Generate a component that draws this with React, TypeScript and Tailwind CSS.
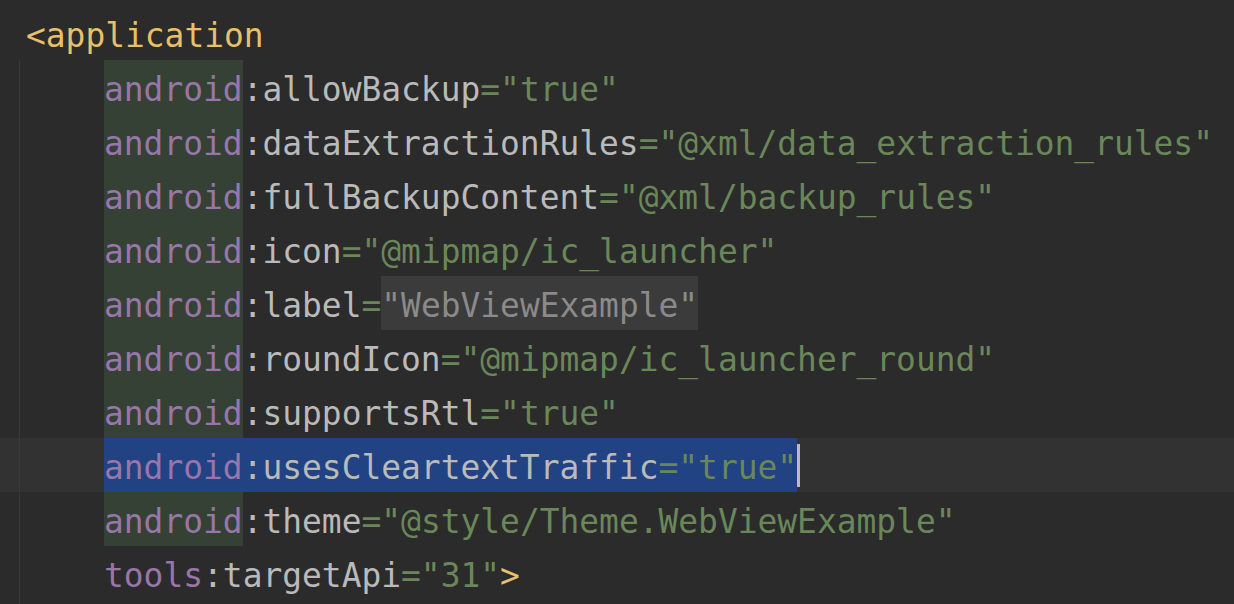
import React from 'react';

type Attr = {
    ns: string;
    name: string;
    value: string;
    flag?: 'label' | 'selected';
    nsMark?: boolean;
};

const attrs: Attr[] = [
    { ns: 'android', name: 'allowBackup', value: 'true', nsMark: true },
    { ns: 'android', name: 'dataExtractionRules', value: '@xml/data_extraction_rules', nsMark: true },
    { ns: 'android', name: 'fullBackupContent', value: '@xml/backup_rules', nsMark: true },
    { ns: 'android', name: 'icon', value: '@mipmap/ic_launcher', nsMark: true },
    { ns: 'android', name: 'label', value: 'WebViewExample', flag: 'label', nsMark: true },
    { ns: 'android', name: 'roundIcon', value: '@mipmap/ic_launcher_round', nsMark: true },
    { ns: 'android', name: 'supportsRtl', value: 'true', nsMark: true },
    { ns: 'android', name: 'usesCleartextTraffic', value: 'true', flag: 'selected' },
    { ns: 'android', name: 'theme', value: '@style/Theme.WebViewExample', nsMark: true },
    { ns: 'tools', name: 'targetApi', value: '31' },
];

const mono = "font-['DejaVu_Sans_Mono','Liberation_Mono',monospace]";
// token cell: full row height, text nudged a little below centre like the IDE
const tok = 'h-full flex items-center pt-[6px]';

const Guide = () => (
    <>
        <div className="w-[19px] shrink-0" />
        <div className="w-px shrink-0 self-stretch bg-[#393939]" />
    </>
);

const AttrLine: React.FC<{ a: Attr; last?: boolean }> = ({ a, last }) => {
    const selected = a.flag === 'selected';
    return (
        <div className={`flex h-[54px] ${selected ? 'bg-[#323232]' : ''}`}>
            <Guide />
            <div className="pl-[84px] flex items-stretch">
                <span className={`flex items-center ${selected ? 'bg-[#214283]' : ''}`}>
                    <span className={`${tok} text-[#9876aa] ${a.nsMark ? 'bg-[#344134]' : ''}`}>{a.ns}</span>
                    <span className={`${tok} text-[#bababa]`}>:{a.name}</span>
                    <span className={`${tok} text-[#6a8759]`}>=</span>
                    {a.flag === 'label' ? (
                        <span className={`${tok} bg-[#3b3b3b] text-[#8a8a8a]`}>"{a.value}"</span>
                    ) : (
                        <span className={`${tok} text-[#6a8759]`}>"{a.value}"</span>
                    )}
                    {last && <span className={`${tok} text-[#e8bf6a]`}>&gt;</span>}
                </span>
                {selected && (
                    <span className="flex items-center">
                        <span className="w-[3px] h-[43px] bg-[#bbbbbb]" />
                    </span>
                )}
            </div>
        </div>
    );
};

export default function App() {
    return (
        <div className={`w-[1234px] h-[604px] overflow-hidden bg-[#2b2b2b] pt-[6px] whitespace-pre text-[32.9px] leading-none ${mono}`}>
            <div className="h-[54px] flex items-center pt-[6px] pl-[26px] text-[#e8bf6a]">&lt;application</div>
            {attrs.map((a, i) => (
                <AttrLine key={a.name} a={a} last={i === attrs.length - 1} />
            ))}
            <div className="flex h-[54px]">
                <Guide />
            </div>
        </div>
    );
}
